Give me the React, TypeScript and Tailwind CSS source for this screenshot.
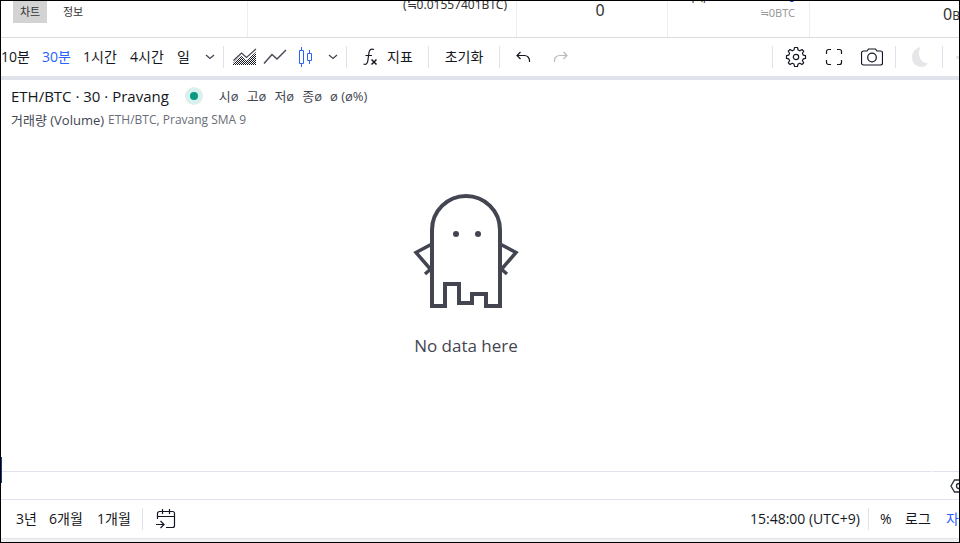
import type { ReactNode } from "react";

const BAR_TEXT = "font-['Open_Sans','Noto_Sans_CJK_KR',sans-serif] text-[14px] leading-4 text-[#131722]";

const INTERVALS = [
  { label: "10분", cls: "w-[41px]" },
  { label: "30분", cls: "w-[41px] text-[#2962ff]" },
  { label: "1시간", cls: "w-[47px]" },
  { label: "4시간", cls: "w-[47px]" },
  { label: "일", cls: "w-5" },
];

const OHLC = ["시ø", "고ø", "저ø", "종ø", "ø (ø%)"];

function Divider() {
  return <span className="h-[22px] w-px shrink-0 bg-[#e0e3eb]" />;
}

function IconButton({ label, className, children }: { label: string; className: string; children: ReactNode }) {
  return (
    <button type="button" aria-label={label} className={`flex h-7 shrink-0 items-center justify-center ${className}`}>
      {children}
    </button>
  );
}

function ChevronIcon() {
  return (
    <svg width="10" height="6" viewBox="0 0 10 6" fill="none" stroke="#434651" strokeWidth="1.3">
      <path d="M1 1l4 3.500L9 1" />
    </svg>
  );
}

function AreaIcon() {
  return (
    <svg width="24" height="18" viewBox="0 0 24 18" fill="none" shapeRendering="auto">
      <defs>
        <pattern id="dots" width="2" height="2" patternUnits="userSpaceOnUse">
          <path fill="#131722" d="M0 0h1v1H0zM1 1h1v1H1z" />
        </pattern>
      </defs>
      <path fill="url(#dots)" d="M0 17v-2l8-7.500 5 5L23 4v13z" />
      <path stroke="#434651" strokeWidth="1.2" d="M.5 12.500l8-7.500 5 4.500 9.500-8.500" />
    </svg>
  );
}

function LineIcon() {
  return (
    <svg width="24" height="18" viewBox="0 0 24 18" fill="none" stroke="#434651" strokeWidth="1.400">
      <path d="M1 15.500l8-9 5 4.500 9-9" />
    </svg>
  );
}

function CandleIcon() {
  return (
    <svg width="16" height="20" viewBox="0 0 16 20" fill="none" stroke="#2962ff">
      <path d="M4.500 0v3M4.500 17v3M2.500 3.500h4v13h-4zM12.500 3v3M12.500 14v3M10.500 6.500h4v7h-4z" />
    </svg>
  );
}

function FxIcon() {
  return (
    <svg width="16" height="18" viewBox="0 0 16 18" fill="none" stroke="#131722">
      <path strokeWidth="1.200" d="M11 1.500C8 .3 6.500 1.500 6 4.500L4.800 13c-.5 3-2 3.800-4.300 3M2.500 7.500H9" />
      <path strokeWidth="1.500" d="M8.500 11.500l5 5M13.500 11.500l-5 5" />
    </svg>
  );
}

function UndoIcon({ color, flip }: { color: string; flip?: boolean }) {
  return (
    <svg width="16" height="12" viewBox="0 0 16 12" fill="none" stroke={color} strokeWidth="1.200">
      <path
        d={
          flip
            ? "M14 4.500H6.500a5 5 0 0 0-5 5V11M10.500 1l3.500 3.500L10.500 8"
            : "M2 4.500h7.500a5 5 0 0 1 5 5V11M5.500 1L2 4.500 5.500 8"
        }
      />
    </svg>
  );
}

function GearIcon() {
  return (
    <svg width="22" height="22" viewBox="0 0 22 22" fill="none" stroke="#131722" strokeWidth="1.200" strokeLinejoin="round">
      <path d="M9.500 1.500h3l.6 2.500 1.800.8L17 3.500 18.700 5.200l-1.300 2.100.8 1.800 2.300.5v2.800l-2.300.5-.8 1.800 1.300 2.100-1.700 1.700-2.100-1.300-1.800.8-.6 2.500h-3L9 18l-1.800-.8L5 18.500 3.300 16.800l1.300-2.100-.8-1.800-2.300-.5V9.600l2.300-.5.8-1.800L3.300 5.200 5 3.500l2.200 1.300L9 4z" />
      <circle cx="11" cy="11" r="2.700" />
    </svg>
  );
}

function FullscreenIcon() {
  return (
    <svg width="18" height="18" viewBox="0 0 18 18" fill="none" stroke="#131722" strokeWidth="1.200">
      <path d="M1.500 6V3.500a2 2 0 0 1 2-2H6M12 1.500h2.500a2 2 0 0 1 2 2V6M16.500 12v2.500a2 2 0 0 1-2 2H12M6 16.500H3.500a2 2 0 0 1-2-2V12" />
    </svg>
  );
}

function CameraIcon() {
  return (
    <svg width="22" height="18" viewBox="0 0 22 18" fill="none" stroke="#131722" strokeWidth="1.200">
      <path d="M6 3L7.500 1h7L16 3h3.500a2 2 0 0 1 2 2v10a2 2 0 0 1-2 2h-17a2 2 0 0 1-2-2V5a2 2 0 0 1 2-2z" />
      <circle cx="11" cy="9.500" r="4.300" />
    </svg>
  );
}

function MoonIcon() {
  return (
    <svg width="17" height="20" viewBox="0 0 17 20" fill="#e6e6e8">
      <path d="M9.500 0A10 10 0 0 0 1 10c0 5.800 4.200 10 9.500 10 2.700 0 5-1.200 6.500-3.500C10 16.500 5.500 8 9.500 0z" />
    </svg>
  );
}

function GhostIcon() {
  return (
    <svg width="108" height="116" viewBox="0 0 108 116" fill="none" stroke="#434651" strokeWidth="4">
      <path d="M20 113V37a34 34 0 0 1 68 0v76H74V101H60v9H47V91H33v22z" />
      <path strokeWidth="3.500" d="M20 51L4 59.500 20 78M13 81l7-6M88 51l16 8.500L88 78M95 81l-7-6" />
      <circle cx="44" cy="41" r="3" fill="#434651" stroke="none" />
      <circle cx="66" cy="41" r="3" fill="#434651" stroke="none" />
    </svg>
  );
}

function GoToIcon() {
  return (
    <svg width="20" height="20" viewBox="0 0 20 20" fill="none" stroke="#131722" strokeWidth="1.200">
      <path d="M1.500 10V4.500a2 2 0 0 1 2-2h13a2 2 0 0 1 2 2v12a2 2 0 0 1-2 2H10M1.500 7.500h17M6.500 0v5M13.500 0v5M0 15.500h7.500M4.500 12l3.500 3.500L4.500 19" />
    </svg>
  );
}

function HexIcon() {
  return (
    <svg width="18" height="14" viewBox="0 0 18 14" fill="none" stroke="#2a2e39" strokeWidth="1.300">
      <path d="M4.500 1h9L17 7l-3.500 6h-9L1 7z" />
      <circle cx="9" cy="7" r="2.500" />
    </svg>
  );
}

function Summary() {
  return (
    <header className="flex h-[37px] shrink-0 overflow-hidden border-b border-[#dcdcdc] font-['Noto_Sans','Noto_Sans_CJK_KR',sans-serif] text-[#333]">
      <nav className="flex w-[247px] shrink-0 items-start border-r border-[#eee] pl-3 text-[11px] leading-[22px]">
        <button type="button" className="w-[34px] bg-[#d3d3d3]">차트</button>
        <button type="button" className="ml-2 w-9">정보</button>
      </nav>
      <div className="w-[269px] shrink-0 border-r border-[#eee] pr-[9px] text-right text-[12px] leading-[8px]">(≒0.01557401BTC)</div>
      <div className="w-[151px] shrink-0 border-r border-[#eee] pl-4 text-center text-[16px] leading-[18px]">0</div>
      <div className="w-[142px] shrink-0 border-r border-[#eee] pl-4 pr-[14px]">
        <div className="-mt-[9px] flex justify-between text-[12px] leading-3">
          <span>거래</span>
          <span className="text-[#1a3fd0]">0</span>
        </div>
        <p className="text-right text-[11px] leading-[18px] text-[#999]">≒0BTC</p>
      </div>
      <div className="flex-1 overflow-hidden whitespace-nowrap pl-[133px] text-[16px] leading-[26px]">
        0<span className="text-[12px]">BTC</span>
      </div>
    </header>
  );
}

function Toolbar() {
  return (
    <div className={`flex h-[38px] shrink-0 items-center overflow-hidden whitespace-nowrap ${BAR_TEXT}`}>
      {INTERVALS.map((i) => (
        <button key={i.label} type="button" className={`shrink-0 text-left ${i.cls}`}>{i.label}</button>
      ))}
      <IconButton label="간격 더보기" className="w-[26px]"><ChevronIcon /></IconButton>
      <Divider />
      <IconButton label="영역" className="ml-[6px] w-[30px]"><AreaIcon /></IconButton>
      <IconButton label="라인" className="w-[30px]"><LineIcon /></IconButton>
      <IconButton label="캔들" className="w-[30px]"><CandleIcon /></IconButton>
      <IconButton label="차트 유형" className="w-[26px]"><ChevronIcon /></IconButton>
      <Divider />
      <button type="button" className="ml-4 flex w-[65px] shrink-0 items-center gap-2"><FxIcon />지표</button>
      <Divider />
      <button type="button" className="w-[70px] shrink-0">초기화</button>
      <Divider />
      <IconButton label="실행 취소" className="ml-[10px] w-[26px]"><UndoIcon color="#131722" /></IconButton>
      <IconButton label="다시 실행" className="ml-3 w-[26px]"><UndoIcon color="#b8bac0" flip /></IconButton>
      <div className="flex-1" />
      <Divider />
      <IconButton label="설정" className="ml-[10px] w-[26px]"><GearIcon /></IconButton>
      <IconButton label="전체 화면" className="ml-3 w-[26px]"><FullscreenIcon /></IconButton>
      <IconButton label="스냅샷" className="ml-3 mr-[10px] w-[26px]"><CameraIcon /></IconButton>
      <Divider />
      <IconButton label="다크 모드" className="mx-[10px] w-[26px]"><MoonIcon /></IconButton>
      <Divider />
      <span className="flex w-4 shrink-0 justify-end">
        <span className="h-[3px] w-[3px] bg-[#e6e6e8]" />
      </span>
    </div>
  );
}

export default function App() {
  return (
    <div className="flex h-screen flex-col overflow-hidden border border-black bg-white">
      <Summary />
      <Toolbar />
      <div className="h-1 shrink-0 bg-[#e0e3eb]" />
      <main className="relative flex flex-1 flex-col px-[10px] pt-[6px] font-['Open_Sans','Noto_Sans_CJK_KR',sans-serif]">
        <div className="flex items-center text-[#131722]">
          <h1 className="text-[15px] leading-5">ETH/BTC · 30 · Pravang</h1>
          <span className="ml-4 flex size-[18px] items-center justify-center rounded-full bg-[#daf0ec]">
            <span className="size-2 rounded-full bg-[#089981]" />
          </span>
          <p className="ml-4 flex gap-2 text-[13px] leading-5 text-[#434651]">
            {OHLC.map((v) => (
              <span key={v}>{v}</span>
            ))}
          </p>
        </div>
        <p className="mt-1 flex gap-1 text-[12px] leading-5 text-[#6a6d78]">
          <span className="text-[13px] text-[#434651]">거래량 (Volume)</span>
          <span>ETH/BTC, Pravang SMA 9</span>
        </p>
        <div className="flex flex-1 flex-col items-center pr-7 pt-[63px]">
          <GhostIcon />
          <p className="mt-[25px] text-[17px] font-medium leading-6 text-[#434651]">No data here</p>
        </div>
        <span className="absolute -bottom-3 left-0 h-[26px] w-px bg-[#1f3a8a]" />
      </main>
      <div className="flex h-7 shrink-0 gap-px">
        <div className="flex-1 border-t border-[#e0e3eb]" />
        <div className="flex w-[27px] items-center overflow-hidden border-t border-[#e0e3eb] pl-[18px]">
          <span className="shrink-0"><HexIcon /></span>
        </div>
      </div>
      <footer className={`flex h-10 shrink-0 items-center border-y border-[#e0e3eb] text-left ${BAR_TEXT}`}>
        <button type="button" className="ml-[15px] w-[33px] text-left">3년</button>
        <button type="button" className="w-12 text-left">6개월</button>
        <button type="button" className="w-[45px] text-left">1개월</button>
        <Divider />
        <IconButton label="날짜로 이동" className="ml-[10px] w-[26px]"><GoToIcon /></IconButton>
        <div className="flex-1" />
        <button type="button" className="mr-2 whitespace-nowrap">15:48:00 (UTC+9)</button>
        <Divider />
        <button type="button" className="ml-[11px] w-[25px] text-left">%</button>
        <button type="button" className="w-[41px] text-left">로그</button>
        <button type="button" className="w-[13px] text-left text-[#2962ff]">자</button>
      </footer>
      <div className="h-[3px] shrink-0 bg-[#f0f0f0]" />
    </div>
  );
}
